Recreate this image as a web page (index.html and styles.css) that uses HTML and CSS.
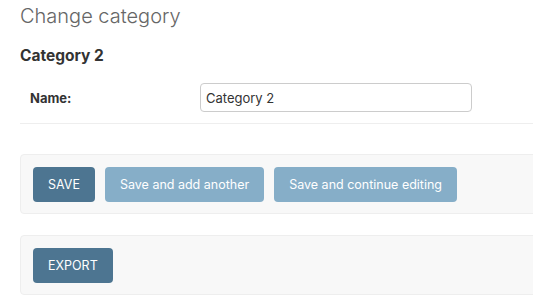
FILE: index.html
```html
<!DOCTYPE html>
<html>
<head>
<meta charset="utf-8">
<link rel="stylesheet" href="styles.css">
</head>
<body>
<div class="content">
  <h1 class="title">Change category</h1>
  <h2 class="subtitle">Category 2</h2>
  <div class="fieldset">
    <div class="form-row">
      <label class="label">Name:</label>
      <input class="text-input" type="text" value="Category 2">
    </div>
  </div>
  <div class="submit-row">
    <button class="btn btn-default">SAVE</button>
    <button class="btn">Save and add another</button>
    <button class="btn">Save and continue editing</button>
  </div>
  <div class="submit-row export-row">
    <button class="btn btn-default">EXPORT</button>
  </div>
</div>
</body>
</html>
```

FILE: styles.css
```css
html, body {
  margin: 0;
  padding: 0;
  background: #fff;
  overflow: hidden;
}
body {
  font-family: Inter, Roboto, "Liberation Sans", sans-serif;
  color: #333;
  width: 533px;
  height: 306px;
}
.content {
  padding: 0 0 0 20px;
  width: 513px;
  overflow: hidden;
}
.title {
  margin: 0;
  padding-top: 4px;
  font-size: 20px;
  font-weight: 300;
  color: #666;
  line-height: 24px;
  height: 24px;
}
.subtitle {
  margin: 18px 0 0;
  font-size: 15.5px;
  font-weight: 700;
  color: #333;
  line-height: 20px;
}
.fieldset {
  margin-top: 10px;
}
.form-row {
  display: flex;
  align-items: center;
  padding: 7px 10px 11px;
  border-bottom: 1px solid #eee;
}
.label {
  width: 170px;
  font-size: 13px;
  font-weight: 700;
  color: #333;
}
.text-input {
  box-sizing: border-box;
  width: 272px;
  height: 29px;
  border: 1px solid #ccc;
  border-radius: 4px;
  padding: 0 5px;
  font-family: inherit;
  font-size: 13px;
  color: #333;
  background: #fff;
  margin: 0;
}
.submit-row {
  display: flex;
  gap: 10px;
  margin-top: 30px;
  margin-right: -20px;
  padding: 12px 12px;
  background: #f8f8f8;
  border: 1px solid #eee;
  border-radius: 4px;
  height: 60px;
  box-sizing: border-box;
}
.export-row {
  margin-top: 21px;
}
.btn {
  height: 35px;
  box-sizing: border-box;
  border: none;
  border-radius: 4px;
  padding: 0 15px;
  background: #86aec8;
  color: #fff;
  font-family: inherit;
  font-size: 12.5px;
  font-weight: 400;
  margin: 0;
}
.btn-default {
  background: #4d7591;
}
```
